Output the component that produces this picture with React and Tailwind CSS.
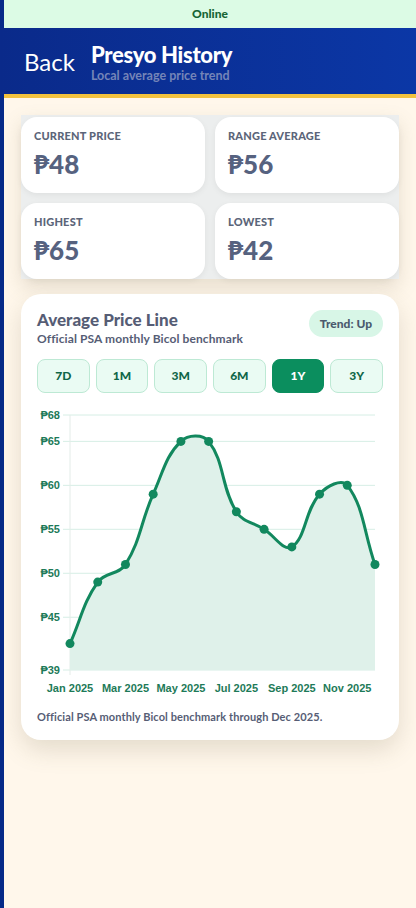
import React from 'react';

const FONT = { fontFamily: 'Lato, "Noto Sans", sans-serif' };
const AXIS_FONT = { fontFamily: '"Liberation Sans", Arial, sans-serif' };

const stats = [
  { label: 'Current Price', value: '₱48' },
  { label: 'Range Average', value: '₱56' },
  { label: 'Highest', value: '₱65' },
  { label: 'Lowest', value: '₱42' },
];

const ranges = ['7D', '1M', '3M', '6M', '1Y', '3Y'];

const data = [42, 49, 51, 59, 65, 65, 57, 55, 53, 59, 60, 51];

// chart area in page coords
const X0 = 70;
const X1 = 375;
const Y0 = 415; // value 68
const Y1 = 670; // value 39
const yOf = (v) => Y0 + ((68 - v) / (68 - 39)) * (Y1 - Y0);
const xOf = (i) => X0 + (i * (X1 - X0)) / 11;

function buildPath(pts, tension = 0.4) {
  const cps = pts.map((cur, i) => {
    const prev = pts[i - 1] || cur;
    const next = pts[i + 1] || cur;
    const d01 = Math.hypot(cur.x - prev.x, cur.y - prev.y);
    const d12 = Math.hypot(next.x - cur.x, next.y - cur.y);
    const s01 = d01 / (d01 + d12 || 1);
    const s12 = d12 / (d01 + d12 || 1);
    const fa = tension * s01;
    const fb = tension * s12;
    return {
      prev: { x: cur.x - fa * (next.x - prev.x), y: cur.y - fa * (next.y - prev.y) },
      next: { x: cur.x + fb * (next.x - prev.x), y: cur.y + fb * (next.y - prev.y) },
    };
  });
  let d = `M${pts[0].x},${pts[0].y}`;
  for (let i = 1; i < pts.length; i++) {
    const a = cps[i - 1].next;
    const b = cps[i].prev;
    d += ` C${a.x},${a.y} ${b.x},${b.y} ${pts[i].x},${pts[i].y}`;
  }
  return d;
}

function PriceChart() {
  const pts = data.map((v, i) => ({ x: xOf(i), y: yOf(v) }));
  const line = buildPath(pts);
  const area = `${line} L${X1},${Y1} L${X0},${Y1} Z`;
  const ticks = [68, 65, 60, 55, 50, 45, 39];
  const months = ['Jan 2025', 'Mar 2025', 'May 2025', 'Jul 2025', 'Sep 2025', 'Nov 2025'];

  return (
    <svg width="346" height="295" viewBox="37 405 346 295" className="block">
      {ticks.map((t) => (
        <g key={t}>
          <line x1={63} x2={X1} y1={yOf(t)} y2={yOf(t)} stroke="#d6eee5" strokeWidth="1" />
          <text x={60} y={yOf(t) + 4} textAnchor="end" fontSize="11" fontWeight="700" fill="#1d7a58" style={AXIS_FONT}>
            ₱{t}
          </text>
        </g>
      ))}
      <line x1={X0} x2={X0} y1={Y0} y2={Y1 + 5} stroke="#e3ece8" strokeWidth="1" />
      <path d={area} fill="#dff1ea" />
      <path d={line} fill="none" stroke="#12885e" strokeWidth="3" strokeLinejoin="round" />
      {pts.map((p, i) => (
        <circle key={i} cx={p.x} cy={p.y} r="4.5" fill="#12885e" />
      ))}
      {months.map((m, i) => (
        <text key={m} x={xOf(i * 2)} y={692} textAnchor="middle" fontSize="11" fontWeight="700" fill="#1d7a58" style={AXIS_FONT}>
          {m}
        </text>
      ))}
    </svg>
  );
}

export default function App() {
  return (
    <div className="min-h-[908px] bg-[#062a88]" style={FONT}>
      <div className="ml-[4px] min-h-[908px] bg-[#fff7eb] flex flex-col">
        <div className="h-[28px] bg-[#dcfbe5] flex items-center justify-center text-[12px] font-black text-[#166534]">
          Online
        </div>

        <div className="-ml-[4px] h-[66px] bg-linear-to-r from-[#0a2a8a] to-[#0b37a6] flex items-center pl-[24px] gap-[16px]">
          <span className="text-[24px] text-white leading-none pt-[2px]">Back</span>
          <div className="flex flex-col pt-[2px]">
            <span className="text-[22px] font-black text-white leading-[26px] tracking-[-0.3px]">Presyo History</span>
            <span className="mt-[1px] text-[12.5px] font-bold text-[#7585b8] leading-[14px]">Local average price trend</span>
          </div>
        </div>
        <div className="h-[4px] bg-[#f3c23e]" />

        <div className="mx-[17px] mt-[17px] pt-[2px] bg-[#eceeee] shadow-[0_8px_18px_rgba(120,110,80,0.18)] grid grid-cols-2 gap-[10px]">
          {stats.map((s) => (
            <div key={s.label} className="h-[76px] bg-white rounded-[16px] px-[13px] pt-[12px] shadow-[0_2px_6px_rgba(0,0,0,0.06)]">
              <div className="text-[11px] font-black uppercase text-[#5b6579] leading-[14px] tracking-[0.2px]">{s.label}</div>
              <div className="mt-[6px] text-[26px] font-black text-[#56627f] leading-[30px]">{s.value}</div>
            </div>
          ))}
        </div>

        <div className="mx-[17px] mt-[15px] bg-white rounded-[20px] px-[16px] pt-[16px] pb-[15px] shadow-[0_10px_24px_rgba(120,110,80,0.2)]">
          <div className="flex justify-between items-start">
            <div>
              <div className="text-[17px] font-black text-[#565d75] leading-[20px]">Average Price Line</div>
              <div className="text-[12px] font-bold text-[#565d75] leading-[17px] tracking-[0.1px]">Official PSA monthly Bicol benchmark</div>
            </div>
            <div className="h-[27px] px-[11px] rounded-full bg-[#d8f6e7] flex items-center text-[12px] font-black text-[#4b5a6e]">
              Trend: Up
            </div>
          </div>

          <div className="mt-[12px] flex gap-[6px]">
            {ranges.map((r) => (
              <div
                key={r}
                className={
                  r === '1Y'
                    ? 'flex-1 h-[34px] rounded-[8px] bg-[#0b8e5e] border border-[#0b8e5e] flex items-center justify-center text-[12px] font-black text-white'
                    : 'flex-1 h-[34px] rounded-[8px] bg-[#eafbf3] border border-[#bde9d4] flex items-center justify-center text-[12px] font-black text-[#0f6648]'
                }
              >
                {r}
              </div>
            ))}
          </div>

          <div className="mt-[12px]">
            <PriceChart />
          </div>

          <div className="mt-[9px] text-[11px] font-bold text-[#565d75] leading-[16px] tracking-[0.1px]">
            Official PSA monthly Bicol benchmark through Dec 2025.
          </div>
        </div>
      </div>
    </div>
  );
}
